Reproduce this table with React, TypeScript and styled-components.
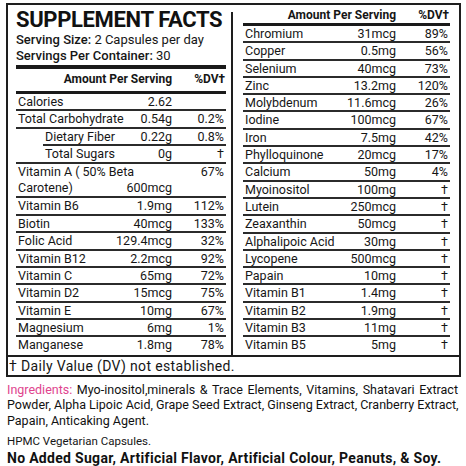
import styled, { createGlobalStyle } from 'styled-components'

const GlobalStyle = createGlobalStyle`
    html, body {
        margin: 0;
        padding: 0;
        background: #ffffff;
    }
    body {
        font-family: Roboto, 'Liberation Sans', sans-serif;
        color: #161616;
    }
`

const Page = styled.div`
    width: 466px;
    height: 466px;
    overflow: hidden;
    padding-top: 3px;
    box-sizing: border-box;
`

const Panel = styled.div`
    margin-left: 6px;
    width: 455px;
    box-sizing: border-box;
    border: 2px solid #1e1e1e;
`

const Columns = styled.div`
    display: grid;
    grid-template-columns: 223px 1fr;
`

const LeftCol = styled.div`
    padding: 0 5px 0 8px;
`

const RightCol = styled.div`
    margin-top: 7px;
    border-left: 2px solid #1e1e1e;
    padding: 0 9px 0 10px;
`

const Title = styled.h1`
    margin: 0;
    padding-top: 1.5px;
    font-size: 22px;
    line-height: 25px;
    font-weight: 700;
    letter-spacing: -0.35px;
    white-space: nowrap;
    color: #111;
`

const ServingLine = styled.div`
    font-size: 13px;
    line-height: 16px;
    white-space: nowrap;
    b {
        font-weight: 500;
    }
`

const ThickBar = styled.div<{ $h: number; $mt?: number }>`
    height: ${(p) => p.$h}px;
    margin-top: ${(p) => p.$mt ?? 0}px;
    background: #1a1a1a;
`

const HeadRow = styled.div<{ $h: number; $lh: number; $mt?: number }>`
    display: grid;
    grid-template-columns: 1fr 54px;
    height: ${(p) => p.$h}px;
    margin-top: ${(p) => p.$mt ?? 0}px;
    font-size: 12px;
    line-height: ${(p) => p.$lh}px;
    font-weight: 700;
    span {
        text-align: right;
    }
    span:last-child {
        padding-right: 1px;
    }
`

const Row = styled.div<{ $h: number; $last?: boolean; $shift?: number; $pad?: number }>`
    display: grid;
    grid-template-columns: minmax(0, 1fr) auto 54px;
    box-sizing: border-box;
    height: ${(p) => p.$h}px;
    margin-left: ${(p) => p.$shift ?? 0}px;
    padding-left: ${(p) => p.$pad ?? 2}px;
    border-bottom: ${(p) => (p.$last ? 'none' : '2px solid #2b2b2b')};
    font-size: 12.5px;
    line-height: ${(p) => p.$h - 2}px;
`

const Name = styled.span<{ $lh?: number }>`
    white-space: nowrap;
    ${(p) => (p.$lh ? `line-height: ${p.$lh}px;` : '')}
`

const Amount = styled.span<{ $end?: boolean; $lh?: number }>`
    text-align: right;
    white-space: nowrap;
    align-self: ${(p) => (p.$end ? 'end' : 'start')};
    ${(p) => (p.$lh ? `line-height: ${p.$lh}px;` : '')}
`

const Dv = styled.span<{ $lh?: number }>`
    text-align: right;
    padding-right: 2px;
    align-self: start;
    ${(p) => (p.$lh ? `line-height: ${p.$lh}px;` : '')}
`

const Footnote = styled.div`
    border-top: 2px solid #1e1e1e;
    height: 18px;
    padding-left: 1px;
    font-size: 14px;
    letter-spacing: 0.35px;
    line-height: 18px;
    white-space: nowrap;
`

const Notes = styled.div`
    margin: 5px 0 0 7px;
    width: 451px;
`

const Line = styled.div<{ $justify?: boolean }>`
    font-size: 12.5px;
    line-height: 15.5px;
    text-align: ${(p) => (p.$justify ? 'justify' : 'left')};
    text-align-last: ${(p) => (p.$justify ? 'justify' : 'left')};
    white-space: nowrap;
    color: #111;
`

const Pink = styled.span`
    color: #e0448e;
`

const Capsules = styled.div`
    margin-top: 6px;
    font-size: 11.5px;
    line-height: 15px;
`

const Allergens = styled.div`
    font-size: 14px;
    letter-spacing: 0.3px;
    line-height: 18px;
    font-weight: 700;
    white-space: nowrap;
    color: #111;
`

type Item = [string, string, string]

const leftRows: Item[] = [
    ['Biotin', '40mcg', '133%'],
    ['Folic Acid', '129.4mcg', '32%'],
    ['Vitamin B12', '2.2mcg', '92%'],
    ['Vitamin C', '65mg', '72%'],
    ['Vitamin D2', '15mcg', '75%'],
    ['Vitamin E', '10mg', '67%'],
    ['Magnesium', '6mg', '1%'],
    ['Manganese', '1.8mg', '78%'],
]

const rightRows: Item[] = [
    ['Chromium', '31mcg', '89%'],
    ['Copper', '0.5mg', '56%'],
    ['Selenium', '40mcg', '73%'],
    ['Zinc', '13.2mg', '120%'],
    ['Molybdenum', '11.6mcg', '26%'],
    ['Iodine', '100mcg', '67%'],
    ['Iron', '7.5mg', '42%'],
    ['Phylloquinone', '20mcg', '17%'],
    ['Calcium', '50mg', '4%'],
    ['Myoinositol', '100mg', '†'],
    ['Lutein', '250mcg', '†'],
    ['Zeaxanthin', '50mcg', '†'],
    ['Alphalipoic Acid', '30mg', '†'],
    ['Lycopene', '500mcg', '†'],
    ['Papain', '10mg', '†'],
    ['Vitamin B1', '1.4mg', '†'],
    ['Vitamin B2', '1.9mg', '†'],
    ['Vitamin B3', '11mg', '†'],
    ['Vitamin B5', '5mg', '†'],
]

const LH = 17.4
const RH = 17.3

export default function App() {
    return (
        <Page>
            <GlobalStyle />
            <Panel>
                <Columns>
                    <LeftCol>
                        <Title>SUPPLEMENT FACTS</Title>
                        <ServingLine>
                            <b>Serving Size:</b> 2 Capsules per day
                        </ServingLine>
                        <ServingLine>
                            <b>Servings Per Container:</b> 30
                        </ServingLine>
                        <ThickBar $h={4} $mt={1.5} />
                        <HeadRow $h={22} $lh={20}>
                            <span>Amount Per Serving</span>
                            <span>%DV†</span>
                        </HeadRow>
                        <ThickBar $h={3} />
                        <Row $h={LH}>
                            <Name>Calories</Name>
                            <Amount>2.62</Amount>
                            <Dv></Dv>
                        </Row>
                        <Row $h={LH}>
                            <Name>Total Carbohydrate</Name>
                            <Amount>0.54g</Amount>
                            <Dv>0.2%</Dv>
                        </Row>
                        <Row $h={LH} $shift={27}>
                            <Name>Dietary Fiber</Name>
                            <Amount>0.22g</Amount>
                            <Dv>0.8%</Dv>
                        </Row>
                        <Row $h={LH} $pad={29}>
                            <Name>Total Sugars</Name>
                            <Amount>0g</Amount>
                            <Dv>†</Dv>
                        </Row>
                        <Row $h={LH * 2}>
                            <Name $lh={LH - 1}>
                                Vitamin A ( 50% Beta
                                <br />
                                Carotene)
                            </Name>
                            <Amount $end $lh={LH - 1}>
                                600mcg
                            </Amount>
                            <Dv $lh={LH - 1}>67%</Dv>
                        </Row>
                        <Row $h={LH}>
                            <Name>Vitamin B6</Name>
                            <Amount>1.9mg</Amount>
                            <Dv>112%</Dv>
                        </Row>
                        {leftRows.map(([n, a, d], i) => (
                            <Row key={n} $h={LH} $last={i === leftRows.length - 1}>
                                <Name>{n}</Name>
                                <Amount>{a}</Amount>
                                <Dv>{d}</Dv>
                            </Row>
                        ))}
                    </LeftCol>
                    <RightCol>
                        <HeadRow $h={15} $lh={15} $mt={-4}>
                            <span>Amount Per Serving</span>
                            <span>%DV†</span>
                        </HeadRow>
                        <ThickBar $h={3} />
                        {rightRows.map(([n, a, d], i) => (
                            <Row key={n} $h={RH} $last={i === rightRows.length - 1}>
                                <Name>{n}</Name>
                                <Amount>{a}</Amount>
                                <Dv>{d}</Dv>
                            </Row>
                        ))}
                    </RightCol>
                </Columns>
                <Footnote>† Daily Value (DV) not established.</Footnote>
            </Panel>
            <Notes>
                <Line $justify>
                    <Pink>Ingredients:</Pink> Myo-inositol,minerals &amp; Trace Elements, Vitamins,
                    Shatavari Extract
                </Line>
                <Line $justify>
                    Powder, Alpha Lipoic Acid, Grape Seed Extract, Ginseng Extract, Cranberry
                    Extract,
                </Line>
                <Line>Papain, Anticaking Agent.</Line>
                <Capsules>HPMC Vegetarian Capsules.</Capsules>
                <Allergens>No Added Sugar, Artificial Flavor, Artificial Colour, Peanuts, &amp; Soy.</Allergens>
            </Notes>
        </Page>
    )
}
